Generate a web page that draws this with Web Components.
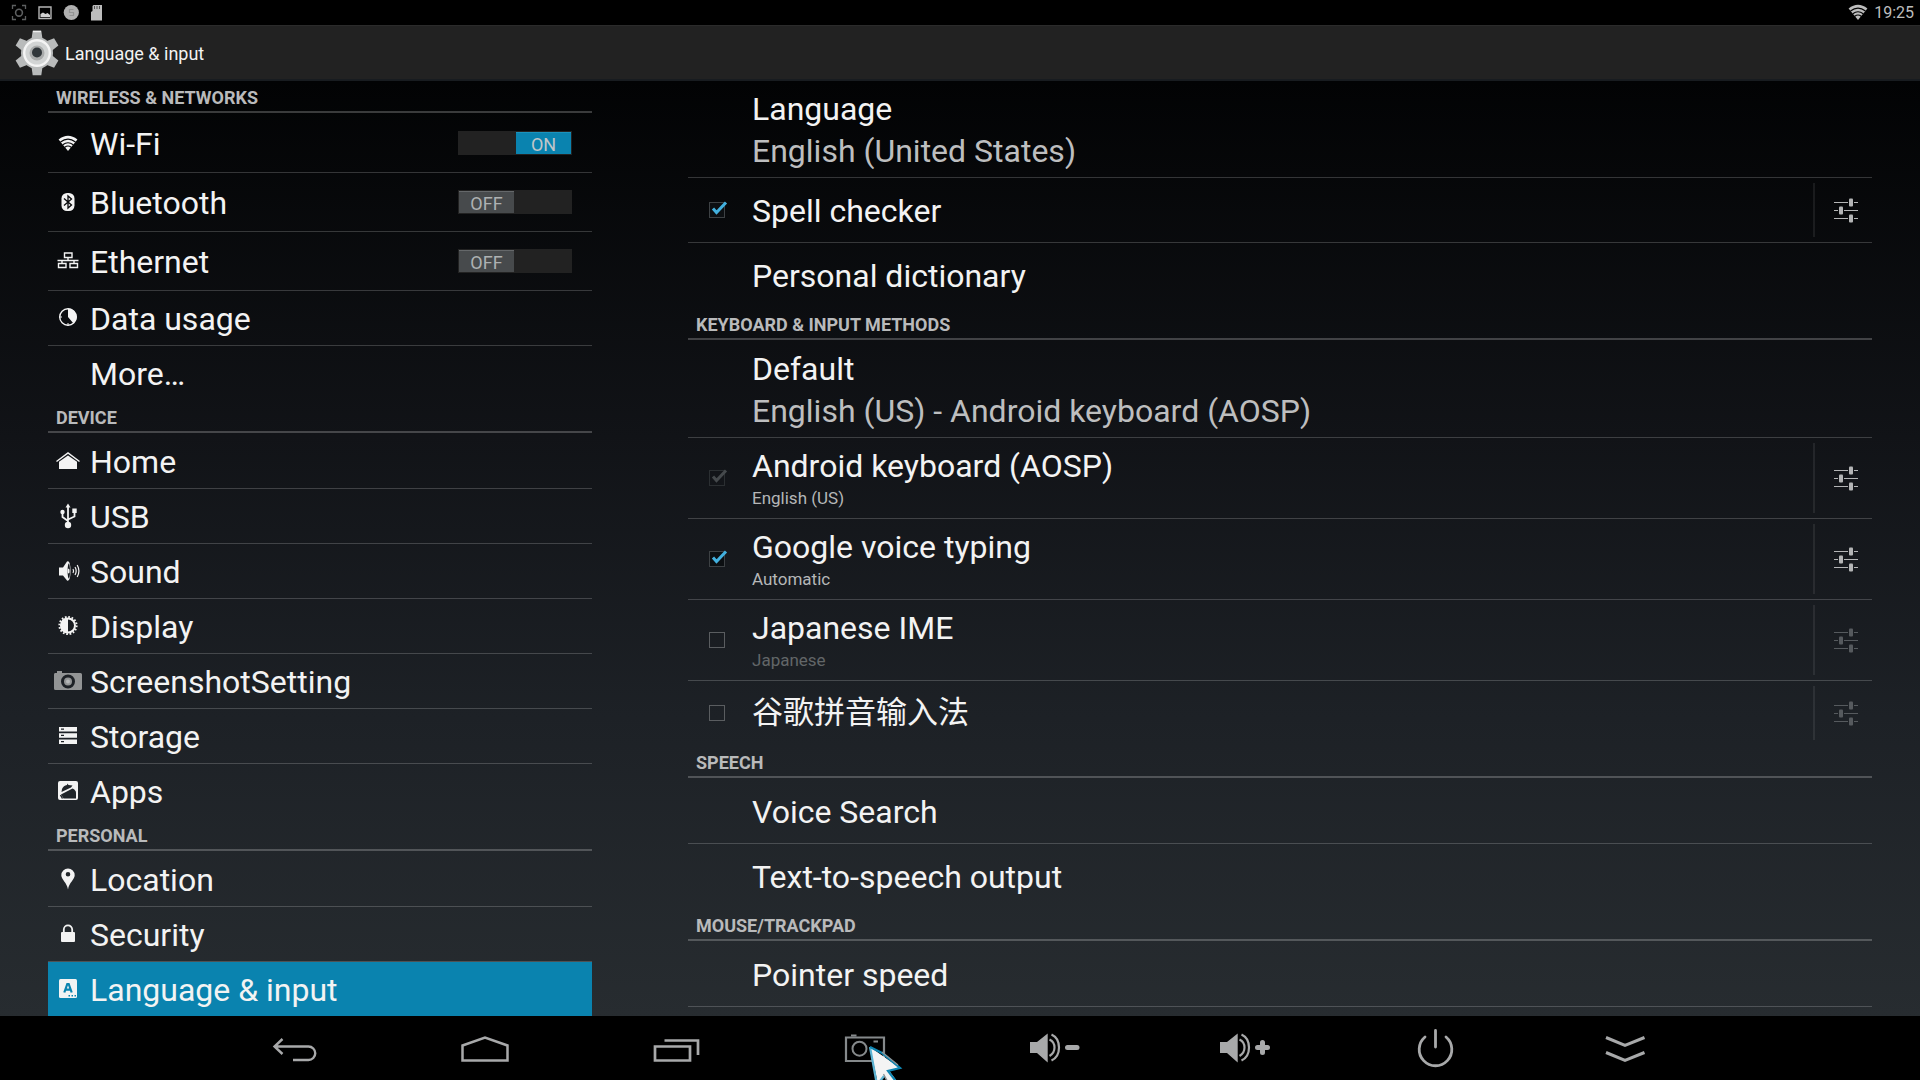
<!DOCTYPE html>
<html lang="en">
<head>
<meta charset="utf-8">
<meta name="viewport" content="width=device-width, initial-scale=1">
<title>Language &amp; input</title>
<style>
  html, body { height: 100%; margin: 0; }
  body { background: #000; color: #f3f3f3; font-family: Roboto, "Noto Sans CJK SC", sans-serif; }
</style>
</head>
<body>
<settings-screen>
  <status-bar slot="status" time="19:25"></status-bar>
  <action-bar slot="bar">Language &amp; input</action-bar>

  <section-header slot="menu">Wireless &amp; networks</section-header>
  <menu-item slot="menu" icon="wifi" switch="on">Wi-Fi</menu-item>
  <menu-item slot="menu" icon="bluetooth" switch="off">Bluetooth</menu-item>
  <menu-item slot="menu" icon="ethernet" switch="off">Ethernet</menu-item>
  <menu-item slot="menu" icon="data">Data usage</menu-item>
  <menu-item slot="menu" last>More…</menu-item>
  <section-header slot="menu">Device</section-header>
  <menu-item slot="menu" icon="home">Home</menu-item>
  <menu-item slot="menu" icon="usb">USB</menu-item>
  <menu-item slot="menu" icon="sound">Sound</menu-item>
  <menu-item slot="menu" icon="display">Display</menu-item>
  <menu-item slot="menu" icon="camera">ScreenshotSetting</menu-item>
  <menu-item slot="menu" icon="storage">Storage</menu-item>
  <menu-item slot="menu" icon="apps" last>Apps</menu-item>
  <section-header slot="menu">Personal</section-header>
  <menu-item slot="menu" icon="location">Location</menu-item>
  <menu-item slot="menu" icon="security">Security</menu-item>
  <menu-item slot="menu" icon="language" selected last>Language &amp; input</menu-item>

  <pref-item slot="prefs" value="English (United States)">Language</pref-item>
  <pref-item slot="prefs" check="on" tune="on">Spell checker</pref-item>
  <pref-item slot="prefs" last>Personal dictionary</pref-item>
  <section-header slot="prefs">Keyboard &amp; input methods</section-header>
  <pref-item slot="prefs" value="English (US) - Android keyboard (AOSP)">Default</pref-item>
  <pref-item slot="prefs" check="locked" tune="on" summary="English (US)">Android keyboard (AOSP)</pref-item>
  <pref-item slot="prefs" check="on" tune="on" summary="Automatic">Google voice typing</pref-item>
  <pref-item slot="prefs" check="off" tune="off" summary="Japanese">Japanese IME</pref-item>
  <pref-item slot="prefs" check="off" tune="off" last lang="zh-CN">谷歌拼音输入法</pref-item>
  <section-header slot="prefs">Speech</section-header>
  <pref-item slot="prefs">Voice Search</pref-item>
  <pref-item slot="prefs" last>Text-to-speech output</pref-item>
  <section-header slot="prefs">Mouse/trackpad</section-header>
  <pref-item slot="prefs">Pointer speed</pref-item>

  <nav-bar slot="nav"></nav-bar>
</settings-screen>

<script>
const svg = (w, h, body) =>
  `<svg width="${w}" height="${h}" viewBox="0 0 ${w} ${h}" fill="none" aria-hidden="true">${body}</svg>`;

const wifiFan = (bg) => `
  <path d="M4.600 10.500Q14 3 23.400 10.500L14 22Z" fill="currentColor"/>
  <path d="M6.500 13Q14 7.200 21.500 13M8.800 15.800Q14 11.600 19.200 15.800M10.800 18.300Q14 15.800 17.200 18.300" stroke="${bg}" stroke-width="1.100"/>`;

/* Menu glyphs share a 28px box. */
const MENU_ICONS = {
  wifi: wifiFan('#050608'),
  bluetooth: `<rect x="7.500" y="5" width="13" height="18" rx="5.500" fill="currentColor"/>
    <path d="M10 10.500L17.500 17 14 20V8L17.500 11 10 17.500" stroke="#08090b" stroke-width="1.300"/>`,
  ethernet: `<path d="M10.500 6h7.500v4.500h-7.500zM4.500 16.500h7.500v4h-7.500zM16 16.500h7.500v4H16zM14 10.500v3M3.500 13.500h21M8 13.500v3M20 13.500v3" stroke="currentColor" stroke-width="1.400"/>`,
  data: `<circle cx="14" cy="13" r="8.300" stroke="currentColor" stroke-width="1.400"/>
    <path d="M14 13V4.500A8.500 8.500 0 0 1 19.500 19.500Z" fill="currentColor"/>
    <path d="M5 13h3M14 19v3" stroke="currentColor"/>`,
  home: `<path d="M2.500 14.500L14 6 25.500 14.500" stroke="currentColor" stroke-width="1.500"/>
    <path d="M5 14.800L14 8.600 23 14.800V22H5z" fill="currentColor"/>`,
  usb: `<path d="M14 22V4M14 19L8.500 15V10M14 17.500L20.500 14.500V9" stroke="currentColor" stroke-width="1.800"/>
    <circle cx="14" cy="23" r="3.200" fill="currentColor"/><circle cx="8.500" cy="10" r="2.200" fill="currentColor"/>
    <path d="M18.300 6.500h4.400v4.400h-4.400zM11.500 5.500L14 1.500 16.500 5.500z" fill="currentColor"/>`,
  sound: `<path d="M5 10.500h4L13 4.500Q16.500 3 16.500 14T13 23.500L9 18.500H5Z" fill="currentColor"/>
    <ellipse cx="14.800" cy="14" rx="1.200" ry="7.500" fill="#171b1f"/><ellipse cx="14.600" cy="14" rx="1" ry="2.600" fill="currentColor"/>
    <path d="M19 12q1.200 2 0 4M21 10q2.400 4 0 8M23.200 8q3.400 6 0 12" stroke="currentColor" stroke-width="1.200"/>`,
  display: `<circle cx="14" cy="13.500" r="8.600" stroke="currentColor" stroke-width="2" stroke-dasharray="1.700 1.677"/>
    <circle cx="14" cy="13.500" r="7" stroke="currentColor" stroke-width="2"/>
    <path d="M14 6v15A7.500 7.500 0 0 1 14 6Z" fill="currentColor"/>`,
  camera: `<path d="M1 6h2V4h5v2h18.500q1.500 0 1.500 1.500v14q0 1.500-1.500 1.500h-25Q0 23 0 21.500v-14Q0 6 1 6Z" fill="#929495"/>
    <circle cx="14" cy="14.500" r="5.500" stroke="#1d2126" stroke-width="3"/><circle cx="14" cy="14.500" r="2" fill="#b5b7b8"/>`,
  storage: `<path d="M5 5h18v4.500H5zM5 11.200h18v4.500H5zM5 17.500h18V22H5z" fill="currentColor"/>
    <path d="M7 7.200h3M7 13.400h3M7 19.700h3" stroke="#1e2227" stroke-width="1.300"/>`,
  apps: `<path fill-rule="evenodd" d="M6 4h16q2 0 2 2v15q0 2-2 2H6q-2 0-2-2V6q0-2 2-2Z" fill="currentColor"/>
    <path d="M8 12Q9.500 8.500 13 8L13.500 6.500 14.500 8 18.500 8.500 17 10.500 7.500 15Z" fill="#20252a"/>
    <path d="M7 17.500L18.500 11.500Q22 13 22 16V21.500H9.500Z" fill="#20252a"/>
    <path d="M6.500 18L8.500 21.500" stroke="#20252a" stroke-width="1.500"/>
    <path d="M14.500 21.500L20 14.500" stroke="currentColor" stroke-width="0"/>`,
  location: `<path fill-rule="evenodd" d="M14 3.500A6.700 6.700 0 0 1 20.700 10.200C20.700 14.500 15 17.500 14 24.500 13 17.500 7.300 14.500 7.300 10.200A6.700 6.700 0 0 1 14 3.500ZM14 7a2.300 2.300 0 1 0 0 4.600A2.300 2.300 0 1 0 14 7Z" fill="currentColor"/>`,
  security: `<rect x="7" y="12" width="14" height="10" rx="1" fill="currentColor"/>
    <path d="M9.800 12V9.500a4.200 4.200 0 0 1 8.400 0V12" stroke="currentColor" stroke-width="1.800"/>`,
  language: `<rect x="5" y="4" width="18" height="19" rx="1.500" fill="currentColor"/>
    <path d="M10.300 17.500L13.300 9h1.400L17.700 17.500M11.300 14.600h5.400" stroke="#0a83af" stroke-width="2.200"/>
    <path d="M14.500 20.700h1.500M17.500 20.700H19M20.500 20.700H22" stroke="#0a83af" stroke-width="1.500"/>`
};

/* Navigation glyphs share a 64px box. */
const speaker = `<path d="M7 26h7L24.700 17.500V46.500L14 37H7Z" fill="currentColor"/>
  <path d="M26.500 23.500Q31.500 26 31.500 31.500T26.500 40M28.500 18.500Q36 22 36 31.500T28.500 44.500" stroke="currentColor" stroke-width="2.200"/>`;
const NAV_ICONS = [
  ['Back', `<path d="M19.500 23L11.500 30.500 19.500 38M12 30.500H45.500a6.700 6.700 0 0 1 0 13.500H30" stroke="currentColor" stroke-width="2.400"/>`],
  ['Home', `<path d="M9.500 29.500L32 21.500 54.500 29.500V44.500H9.500Z" stroke="currentColor" stroke-width="2.500"/>`],
  ['Recent apps', `<path d="M12 30.500h35v14h-35zM21.500 24.500H55V39" stroke="currentColor" stroke-width="2.700"/>`],
  ['Screenshot', `<g stroke="#85898b"><path d="M13 21.500h38v23.500H13z" stroke-width="2.200"/><path d="M18 19.500h5.500M40.500 25.500H45" stroke-width="2.200"/><circle cx="26.500" cy="32.700" r="7" stroke-width="2"/></g>`],
  ['Volume down', speaker + `<path d="M44.500 31.500H54" stroke="currentColor" stroke-width="5" stroke-linecap="round"/>`],
  ['Volume up', speaker + `<path d="M44.500 31.500H54.500M49.500 26.500V36.500" stroke="currentColor" stroke-width="5" stroke-linecap="round"/>`],
  ['Power', `<path d="M32.500 14.500V31M22 21A16.300 16.300 0 1 0 43 21" stroke="currentColor" stroke-width="2.800" stroke-linecap="round"/>`],
  ['Hide bar', `<path d="M13 21.500L32 29.500 51.500 21.500M13 36.500L32 44.500 51.500 36.500" stroke="currentColor" stroke-width="3"/>`]
];

const gearTeeth = [0, 60, 120, 180, 240, 300].map(a =>
  `<path d="M18.500 10L19.700 1.800H28.300L29.500 10Z" transform="rotate(${a} 24 24)"/>`).join('');

function define(name, markup, setup) {
  customElements.define(name, class extends HTMLElement {
    constructor() {
      super();
      this.attachShadow({ mode: 'open' });
    }
    connectedCallback() {
      this.shadowRoot.innerHTML = typeof markup === 'function' ? markup(this) : markup;
      if (setup) setup(this);
    }
  });
}

define('settings-screen', `
  <style>
    :host { display: flex; flex-direction: column; height: 100vh; overflow: hidden; }
    main { flex: 1; min-height: 0; overflow: hidden; display: grid; align-items: start;
      grid-template-columns: minmax(0, 544fr) minmax(0, 1184fr); column-gap: 96px; padding: 0 48px;
      background: linear-gradient(#020304, #111317 38%, #1d2126 68%, #272c30); }
  </style>
  <slot name="status"></slot>
  <slot name="bar"></slot>
  <main>
    <nav aria-label="Settings"><slot name="menu"></slot></nav>
    <section aria-label="Language and input"><slot name="prefs"></slot></section>
  </main>
  <slot name="nav"></slot>`);

define('status-bar', el => `
  <style>
    :host { display: flex; align-items: center; justify-content: space-between; height: 25px;
      padding: 0 6px; background: #000; color: #bdbdbd; font-size: 16px; line-height: 25px; }
    div { display: flex; align-items: center; }
    svg { display: block; }
    .right { gap: 2px; }
  </style>
  <div>
    ${svg(26, 25, `<path d="M6.500 9V5.500H10M16 5.500h3.500V9M19.500 16v3.500H16M10 19.500H6.500V16" stroke="#5d5f60" stroke-width="1.300"/><circle cx="13" cy="12.700" r="3.400" stroke="#5d5f60" stroke-width="1.600"/>`)}
    ${svg(26, 25, `<path d="M7 7h12v11.500H7z" stroke="#b5b5b5" stroke-width="1.400"/><path d="M8.500 17v-3l2.500-1.500 2.500 1.500 2-1 2.500 2v2z" fill="#cfcfcf"/>`)}
    ${svg(26, 25, `<circle cx="13.300" cy="12.500" r="7.600" fill="#b0b0b0"/><path d="M15.500 9.500h-4v3h4v3h-4" stroke="#939393" stroke-width="1.200"/>`)}
    ${svg(26, 25, `<path d="M9.500 5H18v15.500H7V12l1.500-1V6z" fill="#bcbcbc"/><path d="M10.500 6v3M13 6v3M15.500 6v3" stroke="#555" stroke-width="1"/>`)}
  </div>
  <div class="right">${svg(28, 25, `<g transform="translate(0 -2)">${wifiFan('#000')}</g>`)}<time>${el.getAttribute('time')}</time></div>`);

define('action-bar', `
  <style>
    :host { display: flex; align-items: center; gap: 4px; height: 53px; padding: 0 13px; background: #222;
      border-top: 1px solid #2b2b2b; border-bottom: 2px solid #181c20; }
    svg { display: block; }
    h1 { margin: 0; padding-top: 2px; font-size: 18px; line-height: 24px; font-weight: 400; }
  </style>
  ${svg(48, 48, `<g fill="#b9bbbb">${gearTeeth}<circle cx="24" cy="24" r="16"/></g>
    <circle cx="24" cy="24" r="9.500" stroke="#d2d4d4" stroke-width="6"/>
    <circle cx="24" cy="24" r="12.800" stroke="#f4f4f4" stroke-width="2.400"/>
    <circle cx="24" cy="24" r="7.500" fill="#a9abab"/><circle cx="24" cy="23.500" r="5" fill="#30363a"/>
    <path d="M20 2.500h8" stroke="#eee" stroke-width="1.500"/>`)}
  <h1><slot></slot></h1>`);

define('section-header', `
  <style>
    :host { display: block; padding: 0 8px; margin-bottom: 1px; border-bottom: 2px solid rgba(255, 255, 255, .22); }
    h2 { margin: 0; font-size: 18px; line-height: 30px; font-weight: 700; text-transform: uppercase;
      color: #b9babb; padding-top: 2px; height: 28px; }
  </style>
  <h2><slot></slot></h2>`);

define('menu-item', el => {
  const on = el.getAttribute('switch');
  return `
  <style>
    :host { display: flex; align-items: center; height: 54px; padding: 0 20px 0 6px;
      border-bottom: 1px solid rgba(255, 255, 255, .19); }
    :host([switch]) { height: 58px; }
    :host([last]) { border-color: transparent; }
    :host([selected]) { background: #0a83af; background-clip: padding-box; }
    a { flex: 1; display: flex; align-items: center; gap: 8px; color: inherit; text-decoration: none;
      font-size: 32px; line-height: 38px; }
    .name { padding-top: 2px; }
    .icon { width: 28px; height: 28px; }
    .icon svg { display: block; }
    label { position: relative; display: flex; width: 112px; height: 22px; padding: 1px; background: #222; }
    input { appearance: none; position: absolute; inset: 0; margin: 0; opacity: 0; }
    label span { width: 55px; box-sizing: border-box; font-size: 18px; line-height: 24px; text-align: center;
      color: #aeb1b2; background: #474a4c; border-top: 1px solid #65686a; }
    input:checked + span { margin-left: auto; background: #0a83af; border-color: #1b93bd; color: #c0c6c9; }
  </style>
  <a href="#"><span class="icon">${svg(28, 28, MENU_ICONS[el.getAttribute('icon')] || '')}</span><span class="name"><slot></slot></span></a>
  ${on ? `<label><input type="checkbox" role="switch" aria-label="${el.textContent}" ${on === 'on' ? 'checked' : ''}><span>${on.toUpperCase()}</span></label>` : ''}`;
});

define('pref-item', el => {
  const get = n => el.getAttribute(n);
  const check = get('check'), tune = get('tune');
  return `
  <style>
    :host { display: flex; align-items: center; height: 64px; padding-left: 21px;
      border-bottom: 1px solid rgba(255, 255, 255, .19); }
    :host([value]) { height: 96px; }
    :host([summary]) { height: 80px; }
    :host([last]) { border-color: transparent; }
    .box { width: 43px; height: 28px; display: flex; align-items: center; position: relative; }
    input { appearance: none; margin: 0; width: 16px; height: 16px; box-sizing: border-box; border: 1px solid #5a5d60; }
    input:checked { border-color: #3d4144; background: #0c0f12; }
    input:disabled { border-color: #2b2f32; background: none; }
    .box svg { position: absolute; left: 0; top: 0; pointer-events: none; }
    .text { flex: 1; min-width: 0; display: flex; flex-direction: column; color: inherit; padding-top: 2px; }
    :host([summary]) .text { padding: 0 0 2px; }
    :host(:lang(zh-CN)) .text { padding: 0; }
    .title { font-size: 32px; line-height: 42px; }
    :host(:lang(zh-CN)) .title { font-size: 31px; }
    .value { font-size: 32px; line-height: 42px; color: #bdbebf; }
    .summary { font-size: 17px; line-height: 22px; color: #b5b7b8; }
    .dim { color: #626668; }
    button { align-self: stretch; margin: 5px 0; width: 59px; padding: 0 0 0 5px; background: none; border: 0;
      border-left: 2px solid rgba(255, 255, 255, .08); color: #b4b5b6; display: flex; align-items: center; justify-content: center; }
    button:disabled { color: #565a5e; }
  </style>
  <span class="box">${check ? `<input type="checkbox" id="c" aria-label="${el.textContent}"
      ${check !== 'off' ? 'checked' : ''} ${check === 'locked' ? 'disabled' : ''}>
      ${check !== 'off' ? svg(28, 28, `<path d="M4 12.500L7.500 16.500 17 6.500" stroke="${check === 'locked' ? '#45494c' : '#42b0de'}" stroke-width="3"/>`) : ''}` : ''}</span>
  <label class="text" for="c"><span class="title"><slot></slot></span>
    ${get('value') ? `<span class="value">${get('value')}</span>` : ''}
    ${get('summary') ? `<span class="summary ${tune === 'off' ? 'dim' : ''}">${get('summary')}</span>` : ''}
  </label>
  ${tune ? `<button aria-label="Settings" ${tune === 'off' ? 'disabled' : ''}>${svg(24, 26, `
    <path d="M0 5.500h14M20 5.500h4M0 13.500h4M10 13.500h14M0 21.500h14M20 21.500h4" stroke="currentColor" stroke-width="1.200"/>
    <g fill="currentColor"><rect x="15" y="1.500" width="4" height="8" rx="1"/><rect x="5" y="9.500" width="4" height="8" rx="1"/><rect x="15" y="17.500" width="4" height="8" rx="1"/></g>`)}</button>` : ''}`;
});

define('nav-bar', `
  <style>
    :host { display: flex; justify-content: center; background: #000; height: 64px; overflow: hidden; }
    button { flex: 0 1 190px; display: flex; justify-content: center; position: relative; padding: 0; border: 0;
      background: none; color: #a8a9aa; }
    svg { display: block; flex: none; }
    .pointer { position: absolute; left: 50%; top: 28px; margin-left: 3px; }
  </style>
  ${NAV_ICONS.map(([name, body]) => `<button aria-label="${name}">${svg(64, 64, body)}${name === 'Screenshot' ?
    `<span class="pointer">${svg(38, 36, `
      <path d="M2 3L32 24 21 26.500 31 40H20L16 32 10 40Z" fill="#f4f4f4"/>
      <path d="M2 3L9 41L16 32" stroke="#5db4d3" stroke-width="2.200"/>
      <path d="M2 3L14 9L32 24L20 27L30 40" stroke="#0f86b3" stroke-width="2.200"/>
      <path d="M15.500 30L21 40M14 8L30 21" stroke="#8f9496" stroke-width="1.300"/>`)}</span>` : ''}</button>`).join('')}`);
</script>
</body>
</html>
